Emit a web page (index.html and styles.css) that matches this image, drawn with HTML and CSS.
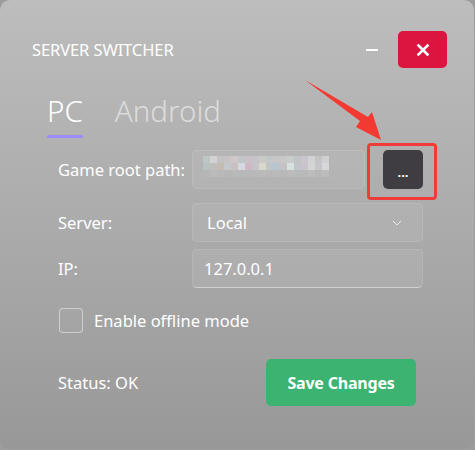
FILE: index.html
```html
<!DOCTYPE html>
<html>
<head>
<meta charset="utf-8">
<link rel="stylesheet" href="styles.css">
</head>
<body>
<div class="window">
  <div class="header">
    <div class="title">SERVER SWITCHER</div>
    <div class="controls">
      <div class="minimize"></div>
      <div class="close">
        <svg width="14" height="14" viewBox="0 0 14 14"><path d="M2.5 2.5 L11.5 11.5 M11.5 2.5 L2.5 11.5" stroke="#fff" stroke-width="2.6" stroke-linecap="square"/></svg>
      </div>
    </div>
  </div>
  <div class="tabs">
    <div class="tab active">PC</div>
    <div class="tab">Android</div>
  </div>
  <div class="form">
    <div class="label row-first">Game root path:</div>
    <div class="path-row row-first">
      <div class="field path">
        <svg class="pixels" width="126" height="28" viewBox="0 0 18 4" shape-rendering="crispEdges">
          <rect x="0" y="0" width="1" height="1" fill="#bfc6c6"/><rect x="1" y="0" width="1" height="1" fill="#d2d2d0"/><rect x="2" y="0" width="1" height="1" fill="#c2c2c3"/><rect x="3" y="0" width="1" height="1" fill="#c5c3c4"/><rect x="4" y="0" width="1" height="1" fill="#cfc7c8"/><rect x="5" y="0" width="1" height="1" fill="#c1c6cb"/><rect x="6" y="0" width="1" height="1" fill="#cbc1c6"/><rect x="7" y="0" width="1" height="1" fill="#c7c4c9"/><rect x="8" y="0" width="1" height="1" fill="#c9c9c5"/><rect x="9" y="0" width="1" height="1" fill="#c3c6c6"/><rect x="10" y="0" width="1" height="1" fill="#c9c6ca"/><rect x="11" y="0" width="1" height="1" fill="#c7c7c5"/><rect x="12" y="0" width="1" height="1" fill="#c8ccca"/><rect x="13" y="0" width="1" height="1" fill="#c1c3c5"/><rect x="14" y="0" width="1" height="1" fill="#cbc6cb"/><rect x="15" y="0" width="1" height="1" fill="#d2d1d3"/><rect x="16" y="0" width="1" height="1" fill="#c4c4c6"/><rect x="17" y="0" width="1" height="1" fill="#d0d0d2"/>
          <rect x="0" y="1" width="1" height="1" fill="#b7c2c1"/><rect x="1" y="1" width="1" height="1" fill="#c0bfbf"/><rect x="2" y="1" width="1" height="1" fill="#c4bcb2"/><rect x="3" y="1" width="1" height="1" fill="#c5c7cb"/><rect x="4" y="1" width="1" height="1" fill="#c7c2c1"/><rect x="5" y="1" width="1" height="1" fill="#d5d8df"/><rect x="6" y="1" width="1" height="1" fill="#cdb9c6"/><rect x="7" y="1" width="1" height="1" fill="#c6c4c8"/><rect x="8" y="1" width="1" height="1" fill="#d9d7cc"/><rect x="9" y="1" width="1" height="1" fill="#c0c6c8"/><rect x="10" y="1" width="1" height="1" fill="#b7c7cf"/><rect x="11" y="1" width="1" height="1" fill="#c3c3c6"/><rect x="12" y="1" width="1" height="1" fill="#d7e0dc"/><rect x="13" y="1" width="1" height="1" fill="#c2c4cc"/><rect x="14" y="1" width="1" height="1" fill="#c7c4cb"/><rect x="15" y="1" width="1" height="1" fill="#d6d5d6"/><rect x="16" y="1" width="1" height="1" fill="#c6c6c8"/><rect x="17" y="1" width="1" height="1" fill="#d7d7d9"/>
          <rect x="0" y="2" width="1" height="1" fill="#b6b6b6"/><rect x="1" y="2" width="1" height="1" fill="#bbbbba"/><rect x="2" y="2" width="1" height="1" fill="#b9b9b9"/><rect x="3" y="2" width="1" height="1" fill="#b7b7b8"/><rect x="4" y="2" width="1" height="1" fill="#b9b9b9"/><rect x="5" y="2" width="1" height="1" fill="#b8b8ba"/><rect x="6" y="2" width="1" height="1" fill="#b9b8b9"/><rect x="7" y="2" width="1" height="1" fill="#b8b8b9"/><rect x="8" y="2" width="1" height="1" fill="#bababa"/><rect x="9" y="2" width="1" height="1" fill="#b8b8b8"/><rect x="10" y="2" width="1" height="1" fill="#b9babb"/><rect x="11" y="2" width="1" height="1" fill="#b8b8b8"/><rect x="12" y="2" width="1" height="1" fill="#bbbbbb"/><rect x="13" y="2" width="1" height="1" fill="#b8b9ba"/><rect x="14" y="2" width="1" height="1" fill="#b9b9ba"/><rect x="15" y="2" width="1" height="1" fill="#bdbdbd"/><rect x="16" y="2" width="1" height="1" fill="#b8b8b8"/><rect x="17" y="2" width="1" height="1" fill="#bcbcbc"/>
        </svg>
      </div>
      <div class="browse">...</div>
    </div>
    <div class="label">Server:</div>
    <div class="field select">
      <span>Local</span>
      <svg width="10" height="6" viewBox="0 0 10 6"><path d="M1 1 L5 5 L9 1" fill="none" stroke="#e8e8e8" stroke-width="1"/></svg>
    </div>
    <div class="label">IP:</div>
    <div class="field ip"><span>127.0.0.1</span></div>
  </div>
  <label class="check-row">
    <span class="checkbox"></span>
    <span>Enable offline mode</span>
  </label>
  <div class="footer">
    <div class="status">Status: OK</div>
    <div class="save">Save Changes</div>
  </div>
  <div class="highlight"></div>
  <svg class="arrow" width="90" height="80" viewBox="0 0 90 80"><polygon points="3,2 58,43 54,49 79,62 70,34 66,39" fill="#f23a33"/></svg>
</div>
</body>
</html>
```
FILE: styles.css
```css
html, body {
  margin: 0;
  padding: 0;
  background: #9c9c9c;
}
body {
  font-family: "Noto Sans", "Open Sans", sans-serif;
  color: #fff;
}
.window {
  position: relative;
  width: 474px;
  height: 449px;
  box-sizing: border-box;
  border-radius: 10px;
  background: linear-gradient(180deg, #bdbdbd 0%, #ababab 50%, #989898 100%);
  padding: 31px 27px 0 32px;
  overflow: hidden;
}
.header {
  display: flex;
  justify-content: space-between;
  align-items: center;
  height: 37px;
}
.title {
  font-size: 16.5px;
  letter-spacing: -0.1px;
}
.controls {
  display: flex;
  align-items: center;
}
.minimize {
  width: 12px;
  height: 2px;
  background: #fff;
  margin-right: 20px;
}
.close {
  width: 49px;
  height: 37px;
  border-radius: 5px;
  background: #dc1440;
  display: flex;
  align-items: center;
  justify-content: center;
}
.tabs {
  display: flex;
  gap: 32px;
  margin: 23px 0 0 15px;
}
.tab {
  font-size: 29.5px;
  font-weight: 300;
  line-height: 40px;
  padding-bottom: 7px;
  color: rgba(232, 232, 232, 0.78);
  position: relative;
}
.tab.active {
  color: #fff;
}
.tab.active::after {
  content: "";
  position: absolute;
  left: 0;
  right: 0;
  bottom: 0;
  height: 3px;
  border-radius: 2px;
  background: #9a8cff;
}
.form {
  display: grid;
  grid-template-columns: 134px 231px;
  row-gap: 7px;
  align-items: center;
  margin: 12px 0 0 26px;
}
.row-first {
  margin-bottom: 7px;
}
.label {
  font-size: 16.5px;
}
.path-row {
  display: flex;
  gap: 18px;
  align-items: center;
}
.field {
  box-sizing: border-box;
  height: 39px;
  border-radius: 5px;
  background: rgba(255, 255, 255, 0.07);
  border: 1px solid rgba(255, 255, 255, 0.1);
  display: flex;
  align-items: center;
  font-size: 16.5px;
}
.path {
  flex: 1;
  padding-left: 10px;
}
.browse {
  width: 40px;
  height: 39px;
  border-radius: 5px;
  background: #3f3d42;
  color: #fff;
  font-weight: 700;
  font-size: 13px;
  display: flex;
  justify-content: center;
  align-items: center;
  line-height: 1;
  padding-top: 5px;
  box-sizing: border-box;
}
.select {
  justify-content: space-between;
  padding: 0 20px 0 14px;
}
.ip {
  padding-left: 11px;
  border-bottom: 1px solid rgba(255, 255, 255, 0.45);
}
.check-row {
  display: flex;
  align-items: center;
  gap: 11px;
  margin: 20px 0 0 27px;
  font-size: 16.5px;
  height: 25px;
}
.checkbox {
  width: 22px;
  height: 23px;
  border: 1px solid rgba(255, 255, 255, 0.45);
  border-radius: 4px;
  background: rgba(255, 255, 255, 0.03);
}
.footer {
  display: flex;
  align-items: center;
  justify-content: space-between;
  margin: 26px 0 0 26px;
  width: 358px;
}
.status {
  font-size: 16.5px;
}
.save {
  width: 150px;
  height: 47px;
  border-radius: 5px;
  background: #3cb371;
  font-weight: 700;
  font-size: 16px;
  letter-spacing: -0.2px;
  display: flex;
  align-items: center;
  justify-content: center;
}
.highlight {
  position: absolute;
  left: 367px;
  top: 143px;
  width: 70px;
  height: 57px;
  box-sizing: border-box;
  border: 3px solid #f23a3a;
  border-radius: 4px;
}
.arrow {
  position: absolute;
  left: 302px;
  top: 78px;
}
```
